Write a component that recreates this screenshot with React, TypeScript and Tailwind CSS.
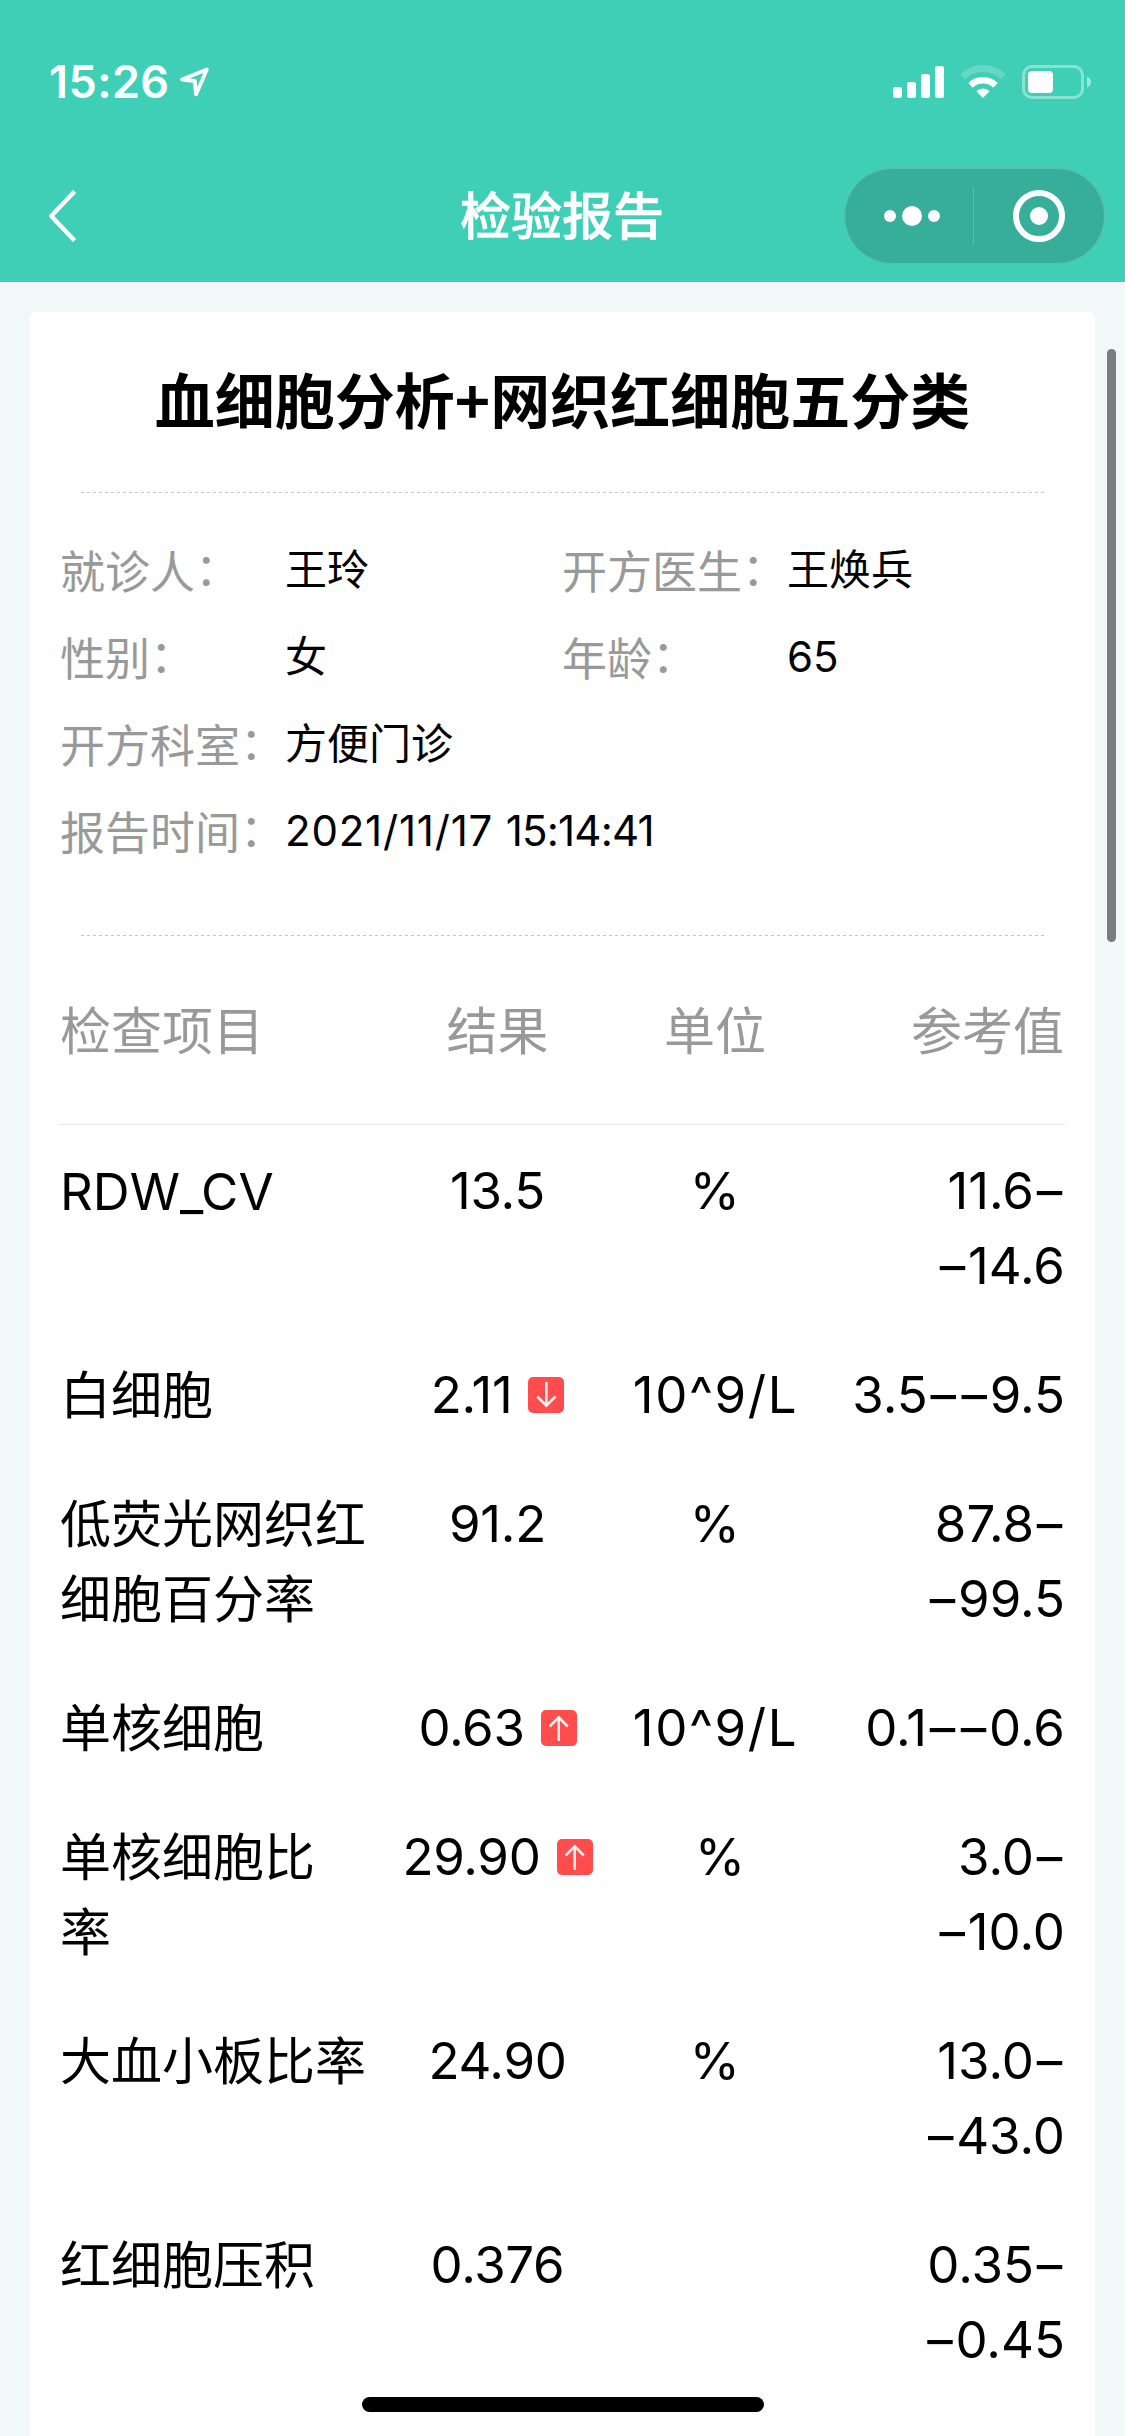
import { ReactNode } from "react";

type Row = {
  name: string[];
  result: string;
  flag?: "up" | "down";
  unit?: string;
  range: string[];
  wide?: boolean;
};

const rows: Row[] = [
  { name: ["RDW_CV"], result: "13.5", unit: "%", range: ["11.6–", "–14.6"] },
  { name: ["白细胞"], result: "2.11", flag: "down", unit: "10^9/L", range: ["3.5––9.5"] },
  { name: ["低荧光网织红", "细胞百分率"], result: "91.2", unit: "%", range: ["87.8–", "–99.5"] },
  { name: ["单核细胞"], result: "0.63", flag: "up", unit: "10^9/L", range: ["0.1––0.6"] },
  { name: ["单核细胞比", "率"], result: "29.90", flag: "up", unit: "%", range: ["3.0–", "–10.0"], wide: true },
  { name: ["大血小板比率"], result: "24.90", unit: "%", range: ["13.0–", "–43.0"] },
  { name: ["红细胞压积"], result: "0.376", range: ["0.35–", "–0.45"] },
];

function StatusBar() {
  return (
    <div className="flex h-[132px] items-start justify-between pt-[54px] pl-[49px] pr-[33px]">
      <div className="flex h-14 items-center">
        <span className="text-[45px] font-semibold leading-[56px] tracking-[0.4px]">15:26</span>
        <svg className="ml-[9px] h-[32px] w-[32px]" viewBox="0 0 32 32" fill="none" stroke="currentColor" strokeWidth="3.8" strokeLinejoin="round">
          <path d="M27.8 3.4L3 13.6L15.8 15L17 28.4Z" />
        </svg>
      </div>
      <div className="flex h-14 items-center">
        <svg className="h-[34px] w-[52px]" viewBox="0 0 52 34" fill="currentColor">
          <rect x="0" y="22" width="9" height="11" rx="2.5" />
          <rect x="14" y="17" width="9" height="16" rx="2.5" />
          <rect x="28" y="9" width="9" height="24" rx="2.5" />
          <rect x="42" y="1" width="9" height="32" rx="2.5" />
        </svg>
        <svg className="ml-[15px] h-[34px] w-[46px]" viewBox="0 0 46 34" fill="none" stroke="currentColor">
          <path d="M2.7 11.8A29 29 0 0 1 43.3 11.8" strokeWidth="7" opacity="0.2" />
          <path d="M10.5 20.3A18 18 0 0 1 35.5 20.3" strokeWidth="6.6" />
          <path d="M23 33L16.4 26.2A9.4 9.4 0 0 1 29.6 26.2Z" fill="currentColor" stroke="none" />
        </svg>
        <svg className="ml-[16px] h-[34px] w-[70px]" viewBox="0 0 70 34" fill="none">
          <rect x="1.5" y="1.5" width="59" height="31" rx="8.5" stroke="currentColor" strokeWidth="3" opacity="0.4" />
          <rect x="6" y="6" width="25" height="22" rx="4" fill="currentColor" />
          <path d="M65 11.5Q69 13 69 17T65 22.5Z" fill="currentColor" opacity="0.5" />
        </svg>
      </div>
    </div>
  );
}

function NavBar() {
  return (
    <div className="flex h-[150px] items-start justify-between px-5 pt-[36px]">
      <div className="flex h-24 w-[260px] items-center pl-7">
        <svg className="h-[52px] w-[30px]" viewBox="0 0 30 52" fill="none" stroke="currentColor" strokeWidth="4.4" strokeLinejoin="round">
          <path d="M26.5 1.5L3.2 26L26.5 50.5" />
        </svg>
      </div>
      <h1 className="text-[51px] font-medium leading-[98px] [-webkit-text-stroke:0.6px]">检验报告</h1>
      <div className="flex h-24 w-[261px] items-center rounded-full border border-[#5dbdac] bg-[#37ae9a]">
        <div className="flex flex-1 items-center justify-center gap-[6px] pl-[6px]">
          <span className="size-3 rounded-full bg-white" />
          <span className="size-[20px] rounded-full bg-white" />
          <span className="size-3 rounded-full bg-white" />
        </div>
        <span className="h-14 w-px bg-[#5dbdac]" />
        <div className="flex w-[130px] items-center justify-center">
          <span className="flex size-[52px] items-center justify-center rounded-full border-[6px] border-white">
            <span className="size-[18px] rounded-full bg-white" />
          </span>
        </div>
      </div>
    </div>
  );
}

function DottedLine() {
  return <div className="mx-[51px] h-px bg-[repeating-linear-gradient(90deg,#c4c4c4_0_3px,transparent_3px_6px)]" />;
}

function Info({ label, children, full }: { label: string; children: ReactNode; full?: boolean }) {
  return (
    <div className={full ? "col-span-2 flex h-[87px]" : "flex h-[87px]"}>
      <span className="w-[226px] shrink-0 whitespace-nowrap text-[45px] leading-[89px] text-[#999]">
        {label}
        <span className="inline-block -translate-y-[3px]">：</span>
      </span>
      <span className="-ml-px whitespace-nowrap text-[42px] leading-[84px]">{children}</span>
    </div>
  );
}

function Flag({ dir }: { dir: "up" | "down" }) {
  return (
    <svg className="ml-4 size-9 shrink-0" viewBox="0 0 36 36" fill="none">
      <rect width="36" height="36" rx="5" fill="#ff4d4d" />
      <g stroke="#fff" strokeWidth="2.6" strokeOpacity="0.9" transform={dir === "up" ? "rotate(180 18 18)" : undefined}>
        <path d="M18.3 5V29" />
        <path d="M9.2 19.5L18.3 28.6L27.4 19.5" />
      </g>
    </svg>
  );
}

// 横杠单独占位，避免连在一起
function Range({ text }: { text: string }) {
  return (
    <div>
      {text.split(/(–)/).map((part, i) =>
        part === "–" ? (
          <span key={i} className="inline-block w-[31px] text-center">
            –
          </span>
        ) : (
          part
        )
      )}
    </div>
  );
}

export default function App() {
  return (
    <div className="relative h-[2436px] w-[1125px] overflow-hidden bg-[#f2f8f8] font-[Inter,'Noto_Sans_CJK_SC',sans-serif] text-black">
      <header className="h-[282px] bg-[#3fcfb6] text-white">
        <StatusBar />
        <NavBar />
      </header>

      <main className="mx-[30px] mt-[30px] h-[2200px] rounded-t-md bg-white">
        <h2 className="h-[180px] text-center font-['Noto_Sans_CJK_SC',sans-serif] text-[60px] font-bold leading-[172px]">
          血细胞分析+网织红细胞五分类
        </h2>
        <DottedLine />

        {/* 就诊信息 */}
        <section className="grid grid-cols-[502px_1fr] pt-[35px] pl-[30px]">
          <Info label="就诊人">王玲</Info>
          <Info label="开方医生">王焕兵</Info>
          <Info label="性别">女</Info>
          <Info label="年龄">65</Info>
          <Info label="开方科室" full>方便门诊</Info>
          <Info label="报告时间" full>
            <span className="tracking-[0.8px]">2021/11/17 </span>
            <span className="tracking-[-0.8px]">15:14:41</span>
          </Info>
        </section>
        <div className="h-[59px]" />
        <DottedLine />

        {/* 检验结果 */}
        <section className="mx-[30px] text-[51px] leading-[75px]">
          <div className="grid h-[189px] grid-cols-[327px_221px_214px_242px] items-center border-b border-[#dfeaea] pt-[2px] text-[#999]">
            <span>检查项目</span>
            <span className="text-center">结果</span>
            <span className="text-center">单位</span>
            <span className="text-right">参考值</span>
          </div>
          <div className="pt-px">
            {rows.map((r) => (
              <div key={r.name.join("")} className="grid grid-cols-[327px_221px_214px_242px] items-start py-[27px]">
                <div className="-mb-px whitespace-nowrap pt-px">
                  {r.name.map((line) => (
                    <div key={line}>{line}</div>
                  ))}
                </div>
                <div className="flex h-[75px] items-center justify-center">
                  <span className="tracking-[-0.3px]">{r.result}</span>
                  {r.flag && <Flag dir={r.flag} />}
                </div>
                <div className={r.wide ? "pl-[10px] text-center" : "pl-px text-center tracking-[1.6px]"}>{r.unit}</div>
                <div className="-mr-px text-right whitespace-nowrap">
                  {r.range.map((line) => (
                    <Range key={line} text={line} />
                  ))}
                </div>
              </div>
            ))}
          </div>
        </section>
      </main>

      {/* 滚动条和底部横条 */}
      <div className="absolute top-[349px] right-[9px] h-[593px] w-[9px] rounded-full bg-[#7a7d7c]" />
      <div className="absolute top-[2397px] left-[362px] h-[15px] w-[402px] rounded-full bg-black" />
    </div>
  );
}
